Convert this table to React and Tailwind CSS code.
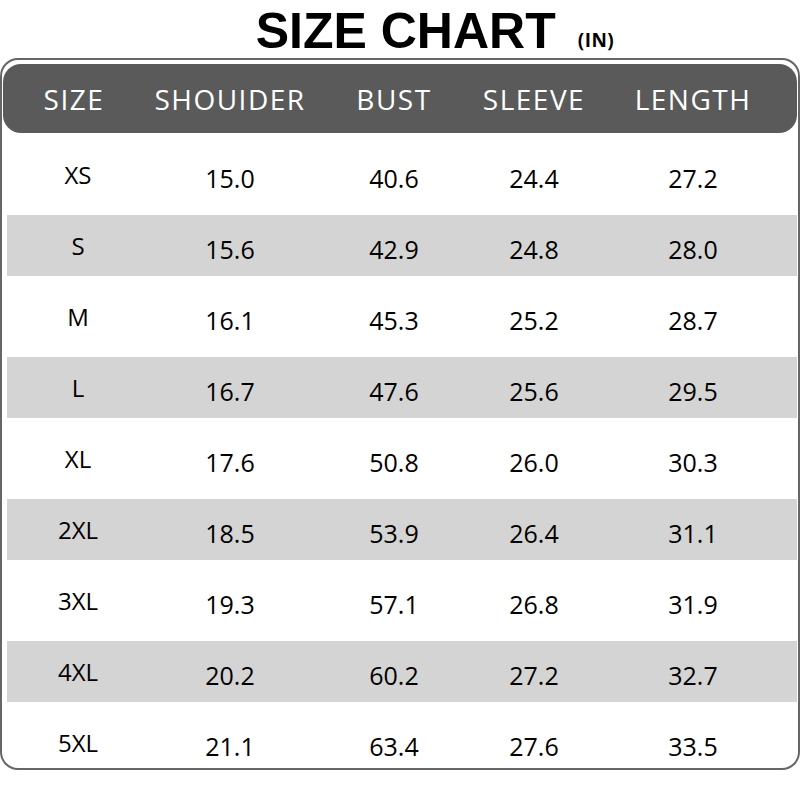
const columns = ["SIZE", "SHOUIDER", "BUST", "SLEEVE", "LENGTH"];

const rows = [
    ["XS", "15.0", "40.6", "24.4", "27.2"],
    ["S", "15.6", "42.9", "24.8", "28.0"],
    ["M", "16.1", "45.3", "25.2", "28.7"],
    ["L", "16.7", "47.6", "25.6", "29.5"],
    ["XL", "17.6", "50.8", "26.0", "30.3"],
    ["2XL", "18.5", "53.9", "26.4", "31.1"],
    ["3XL", "19.3", "57.1", "26.8", "31.9"],
    ["4XL", "20.2", "60.2", "27.2", "32.7"],
    ["5XL", "21.1", "63.4", "27.6", "33.5"],
];

// column widths picked so that the centres line up with the chart
const grid = "grid grid-cols-[142px_162px_166px_114px_204px]";

export default function App() {
    return (
        <div className="w-[800px] h-[800px] bg-white overflow-hidden font-['Open_Sans',sans-serif]">
            <div className="h-[58px] flex items-end justify-center pl-[70px] pb-[2px]">
                <h1 className="text-[50px] leading-[50px] font-bold text-black font-['Liberation_Sans',Arial,sans-serif]">
                    SIZE CHART
                </h1>
                <span className="ml-[22px] mb-[6px] text-[19px] leading-[19px] font-bold tracking-[0.5px] text-black">
                    (IN)
                </span>
            </div>

            <div className="h-[712px] border-2 border-[#666] rounded-[18px] overflow-hidden px-[1px] pt-[4px]">
                <div className="h-[69px] rounded-[18px] bg-[#5a5a5a] text-white">
                    <div className={`${grid} h-full items-center ml-[4px]`}>
                        {columns.map((c, i) => (
                            <div
                                key={c}
                                className={`text-center text-[28px] font-medium tracking-[1.5px] ${i === 0 ? "pr-[8px]" : ""}`}
                            >
                                {c}
                            </div>
                        ))}
                    </div>
                </div>

                <div className="pt-[6px]">
                    {rows.map((r, ri) => (
                        <div key={r[0]} className="h-[71px] py-[5px]">
                            <div
                                className={`${grid} h-full items-center ml-[4px] ${ri % 2 === 1 ? "bg-[#d4d4d4]" : ""}`}
                            >
                                {r.map((v, i) => (
                                    <div
                                        key={i}
                                        className={
                                            i === 0
                                                ? "text-center text-[24px] font-medium text-black"
                                                : "text-center text-[25px] font-medium text-black pt-[8px]"
                                        }
                                    >
                                        {v}
                                    </div>
                                ))}
                            </div>
                        </div>
                    ))}
                </div>
            </div>
        </div>
    );
}
